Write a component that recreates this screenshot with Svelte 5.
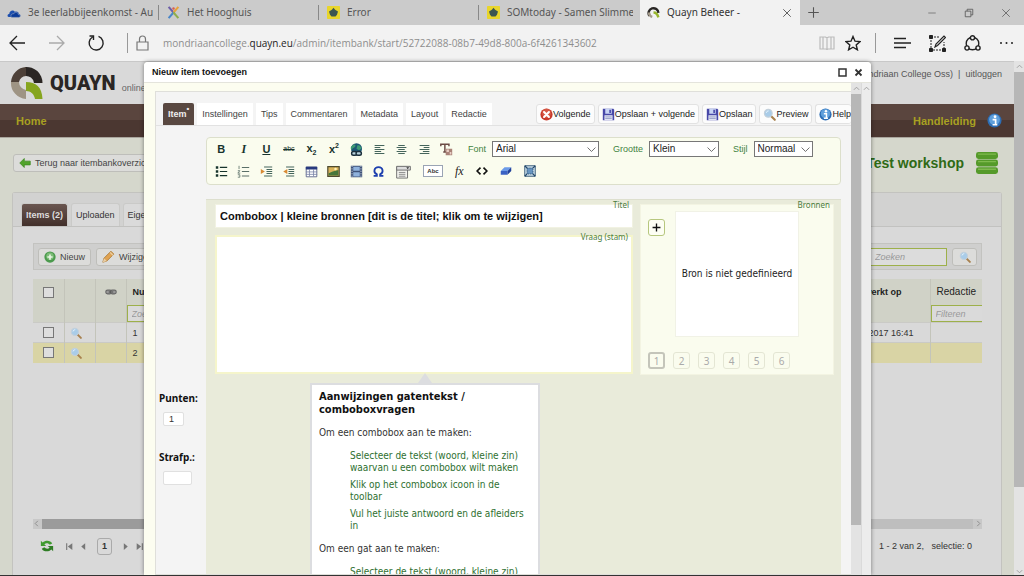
<script>
  const browserTabs = [
    { icon: 'cloud', title: '3e leerlabbijeenkomst - Aug' },
    { icon: 'cross', title: 'Het Hooghuis' },
    { icon: 'som', title: 'Error' },
    { icon: 'som', title: 'SOMtoday - Samen Slimme' }
  ];
  const itemTabs = ['Instellingen', 'Tips', 'Commentaren', 'Metadata', 'Layout', 'Redactie'];
  const actions = [
    { icon: 'stop', label: 'Volgende' },
    { icon: 'save', label: 'Opslaan + volgende' },
    { icon: 'save', label: 'Opslaan' },
    { icon: 'loupe', label: 'Preview' },
    { icon: 'info', label: 'Help' }
  ];
  const formatTools = ['bold', 'italic', 'underline', 'strike', 'sub', 'sup', 'globe', 'left', 'center', 'right', 'clear'];
  const insertTools = ['ul', 'ol', 'outdent', 'indent', 'table', 'image', 'film', 'omega'];
  const extraTools = ['combo', 'gap', 'fx', 'code', 'eraser', 'select'];
  const steps = [
    'Selecteer de tekst (woord, kleine zin) waarvan u een combobox wilt maken',
    'Klik op het combobox icoon in de toolbar',
    'Vul het juiste antwoord en de afleiders in'
  ];
  const rows = [
    { nr: 1, date: '10-03-2017 16:41', active: false },
    { nr: 2, date: '', active: true }
  ];
  let source = $state(1);
  let title = $state('Combobox | kleine bronnen [dit is de titel; klik om te wijzigen]');
  let points = $state('1');
  let penalty = $state('');
</script>

{#snippet icon(name, size = 14)}
  <svg class="icon" width={size} height={size} viewBox="0 0 16 16" fill="none" aria-hidden="true">
    {#if name === 'cloud'}
      <path d="M2 12.500C0 12 .3 9 2.600 9 2.600 5.500 7 4 9 6.500c3-1 4.500 1 4.500 2.500 2.500.2 2.500 3.500 0 3.500z" fill="#1d4fae" />
      <path d="M5 13c-1.500-3 1-4.500 2.500-4 1.500-3 5.500-2 5.500.8 3 0 3 3.200.5 3.200z" fill="#0c3b98" stroke="#cbcbcb" stroke-width=".5" />
    {:else if name === 'cross'}
      <path d="M2 1l6 7" stroke="#6d5ea8" stroke-width="2.500" /><path d="M14 1L8 8" stroke="#e8a33a" stroke-width="2.500" />
      <path d="M8 8l-6 7" stroke="#4a86c8" stroke-width="2.500" /><path d="M8 8l6 7" stroke="#8fae4c" stroke-width="2.500" />
      <circle cx="8" cy="3" r="1.500" fill="#d85c50" />
    {:else if name === 'som'}
      <rect width="16" height="16" rx="1" fill="#e8d52b" />
      <path d="M8 2l2 2.500 3.500 2.300-1.200 4L10.500 13h-5l-1.800-2.200-1.200-4L6 4.500z" fill="#3c5650" />
    {:else if name === 'quayn'}
      <path d="M3 12A6 6 0 1 1 14 8.500" stroke="#2a2725" stroke-width="3" /><path d="M2.500 8a5.500 5.500 0 0 0 4 5.300" stroke="#a59b8b" stroke-width="3" />
      <path d="M8 8c3 0 5 2 6 6" stroke="#97b52c" stroke-width="3" />
    {:else if name === 'stop'}
      <circle cx="8" cy="8" r="7.500" fill="#c93a2b" /><circle cx="8" cy="6.500" r="5.500" fill="#dd6a55" opacity=".6" />
      <path d="M5 5l6 6M11 5l-6 6" stroke="#fff" stroke-width="2.600" stroke-linecap="round" />
    {:else if name === 'save'}
      <path d="M1 1h13l1 1v13H1z" fill="#4848a8" /><path d="M4 1h8v6H4z" fill="#c8d4f4" /><path d="M9 2h2v4H9z" fill="#4848a8" />
      <path d="M3 9h10v6H3z" fill="#e5e8f5" /><path d="M4 11h8M4 13h8" stroke="#8890c0" />
    {:else if name === 'loupe'}
      <path d="M9.500 9.500l5 5" stroke="#a8814e" stroke-width="2.600" stroke-linecap="round" />
      <circle cx="6.500" cy="6.500" r="4.800" fill="#a9cce8" stroke="#c3d0db" stroke-width="1.400" /><path d="M4 6a3 3 0 0 1 3-2.500" stroke="#e5f2fb" stroke-width="1.200" />
    {:else if name === 'info'}
      <circle cx="8" cy="8" r="7.500" fill="#2c6db4" /><circle cx="8" cy="7" r="5.800" fill="#5f9fdb" />
      <circle cx="8.600" cy="4" r="1.500" fill="#fff" /><path d="M6 7h3.200v5M6 12.500h5" stroke="#fff" stroke-width="1.800" />
    {:else if name === 'add'}
      <circle cx="8" cy="8" r="7.500" fill="#4b9a4d" /><circle cx="8" cy="7" r="5" fill="#7cbc76" /><path d="M8 4.500v7M4.500 8h7" stroke="#e8f4e4" stroke-width="2.200" />
    {:else if name === 'pencil'}
      <path d="M1 15l1.500-5L11 1.500 14.500 5 6 13.500z" fill="#e0a352" stroke="#a87632" /><path d="M1 15l1.500-5L6 13.500z" fill="#e8cfa8" /><path d="M10 3l3.500 3.500" stroke="#e8cfa8" stroke-width="1.500" />
    {:else if name === 'back'}
      <path d="M1 8l6-6v3.500h8v5H7V14z" fill="#52a32c" stroke="#3f8a22" />
    {:else if name === 'chain'}
      <rect x="1" y="5.500" width="8" height="5" rx="2.500" fill="#999" stroke="#666" stroke-width="1.500" /><rect x="7" y="5.500" width="8" height="5" rx="2.500" fill="#999" stroke="#666" stroke-width="1.500" />
      <path d="M5 8h6" stroke="#555" stroke-width="1.500" />
    {:else if name === 'refresh'}
      <path d="M1 2v6h6L5 6c2-2 5-1 6 .5l3-1.500C12 1 6 1 3 4z" fill="#3f9a2f" /><path d="M15 14V8H9l2 2c-2 2-5 1-6-.5L2 11c2 4 8 4 11 1z" fill="#2f7d24" />
    {:else if name === 'db'}
      <rect y="0" width="16" height="5" rx="1.800" fill="#559a2a" /><rect y="5.500" width="16" height="5" rx="1.800" fill="#559a2a" /><rect y="11" width="16" height="5" rx="1.800" fill="#559a2a" />
      <path d="M1.500 1.500h13M1.500 7h13M1.500 12.500h13" stroke="#7fba4e" />
    {:else if name === 'globe'}
      <circle cx="8" cy="7" r="6.800" fill="#1d5674" /><path d="M3 3c3-3 5 0 3 2s-3 1-4 4C0 6 1 4 3 3zM9 3c3-1 5 2 5 4l-3 2-3-2z" fill="#3d9a74" />
      <rect x="2" y="10.500" width="6.500" height="4.500" rx="2.200" stroke="#1b2f3c" stroke-width="1.800" fill="#b9d2dc" /><rect x="7.500" y="10.500" width="6.500" height="4.500" rx="2.200" stroke="#1b2f3c" stroke-width="1.800" fill="#b9d2dc" />
    {:else if name === 'left'}
      <path d="M2 3h12M2 5.500h7M2 8h12M2 10.500h8M2 13h12" stroke="#45655c" stroke-width="1.300" />
    {:else if name === 'center'}
      <path d="M4 3h8M2 5.500h12M4 8h8M2 10.500h12M4 13h8" stroke="#45655c" stroke-width="1.300" />
    {:else if name === 'right'}
      <path d="M2 3h12M7 5.500h7M2 8h12M6 10.500h8M2 13h12" stroke="#45655c" stroke-width="1.300" />
    {:else if name === 'clear'}
      <path d="M1 4V1.500h10V4M6 1.500V11M4 11h4" stroke="#6a4a44" stroke-width="1.800" /><path d="M7 7h8v8H7z" fill="#a98278" /><path d="M8 8h3v3H8zM12 11h2v3h-2z" fill="#e9cfc6" />
    {:else if name === 'ul'}
      <path d="M1 3h3M1 8h3M1 13h3" stroke="#16332c" stroke-width="3" /><path d="M6 3h9M6 8h9M6 13h9" stroke="#16332c" stroke-width="1.500" />
    {:else if name === 'ol'}
      <path d="M2.500 1v4M1 7h2.500L1 10h3M1 12h2.500v3H1" stroke="#5a6f68" /><path d="M6 3h9M6 8h9M6 13.500h9" stroke="#5a6f68" stroke-width="1.300" />
    {:else if name === 'outdent' || name === 'indent'}
      <path d="M5 2.500h10M8 5.500h7M8 8h7M8 10.500h7M5 13.500h10" stroke="#45655c" stroke-width="1.400" />
      {#if name === 'outdent'}<path d="M1 5l5 3-5 3z" fill="#d98a34" />{:else}<path d="M6.500 5l-5 3 5 3z" fill="#d98a34" />{/if}
    {:else if name === 'table'}
      <path d="M1.500 2.500h13v12h-13z" fill="#fff" stroke="#4a5580" /><path d="M1 2h14v3.500H1z" fill="#27397e" /><path d="M1 8.500h14M1 11.500h14M5.500 5v9M10.500 5v9" stroke="#7a84a8" />
    {:else if name === 'image'}
      <path d="M1 2h14v12H1z" fill="#d9b35a" stroke="#4c4a30" stroke-width="1.500" /><path d="M2 13V10l5-2 7-2v7z" fill="#46763a" /><circle cx="10.500" cy="5" r="1.600" fill="#fff2b8" />
    {:else if name === 'film'}
      <path d="M1 1h14v14H1z" fill="#3e5278" /><path d="M4 2h8v5H4zM4 9h8v5H4z" fill="#8fb2dc" /><path d="M2.500 1v14M13.500 1v14" stroke="#dfe6f0" stroke-dasharray="1.500 1.500" />
    {:else if name === 'omega'}
      <path d="M2 13.500h4v-2C1 9 2.500 2.500 8 2.500S15 9 10 11.500v2h4" stroke="#1d3fae" stroke-width="2.200" />
    {:else if name === 'combo'}
      <path d="M.7 3h11.600v12H.7z" fill="#f4f4f0" stroke="#6c6c6c" /><path d="M.7 2.500h14.600v4H.7z" fill="#ddd" stroke="#6c6c6c" /><path d="M11 3.500h3l-1.500 2z" fill="#333" /><path d="M3 9h7M3 11h7M3 13h7" stroke="#888" />
    {:else if name === 'code'}
      <path d="M6 3.500L1.500 8 6 12.500M10 3.500L14.500 8 10 12.500" stroke="#111" stroke-width="2.200" />
    {:else if name === 'eraser'}
      <path d="M6 3h9l-5 5H1z" fill="#6c9be8" /><path d="M1 8h9v5H1z" fill="#3a62c4" /><path d="M10 8l5-5v5l-5 5z" fill="#1f3f9a" />
    {:else if name === 'select'}
      <path d="M1 1h14v14H1z" fill="#cfe2ee" stroke="#3d5f7a" stroke-width="1.300" /><path d="M4 4h8v8H4z" fill="#6694c0" stroke="#24486a" stroke-dasharray="2 1" /><path d="M1 1l3 3M15 1l-3 3M1 15l3-3M15 15l-3-3" stroke="#24486a" stroke-width="1.500" />
    {:else if name === 'x'}
      <path d="M3 3l10 10M13 3L3 13" stroke="currentColor" />
    {:else if name === 'plus'}
      <path d="M8 1.500v13M1.500 8h13" stroke="currentColor" stroke-width="1.300" />
    {:else if name === 'boldplus'}
      <path d="M8 1v14M1 8h14" stroke="#111" stroke-width="2.400" />
    {:else if name === 'min'}
      <path d="M2 8h12" stroke="currentColor" />
    {:else if name === 'restore'}
      <path d="M2 5h9v9H2zM5 5V2h9v9h-3" stroke="currentColor" stroke-width="1.300" />
    {:else if name === 'chev'}
      <path d="M1 4.500l7 7 7-7" stroke="#555" stroke-width="1.500" />
    {:else if name === 'up'}
      <path d="M2 11l6-6 6 6" stroke="#999" stroke-width="2" />
    {:else if name === 'down'}
      <path d="M2 5l6 6 6-6" stroke="#999" stroke-width="2" />
    {:else if name === 'lt'}
      <path d="M11 2L5 8l6 6" stroke="#888" stroke-width="2" />
    {:else if name === 'gt'}
      <path d="M5 2l6 6-6 6" stroke="#888" stroke-width="2" />
    {:else if name === 'first'}
      <path d="M3 2v12" stroke="#777" stroke-width="2" /><path d="M13 2v12L5 8z" fill="#777" />
    {:else if name === 'prev'}
      <path d="M11 2v12L4 8z" fill="#777" />
    {:else if name === 'next'}
      <path d="M5 2v12l7-6z" fill="#777" />
    {:else if name === 'last'}
      <path d="M13 2v12" stroke="#777" stroke-width="2" /><path d="M3 2v12l8-6z" fill="#777" />
    {/if}
  </svg>
{/snippet}

<div class="window">
  <header class="tabstrip">
    {#each browserTabs as tab}
      <button class="btab">{@render icon(tab.icon, tab.icon === 'cloud' ? 14 : 13)}<span>{tab.title}</span></button>
    {/each}
    <button class="btab current">{@render icon('quayn', 13)}<span>Quayn Beheer -</span>{@render icon('x', 12)}</button>
    <button class="newtab" aria-label="Nieuw tabblad">{@render icon('plus', 13)}</button>
    <div class="winctl">
      <button aria-label="Minimaliseren">{@render icon('min', 10)}</button>
      <button aria-label="Verkleinen">{@render icon('restore', 10)}</button>
      <button aria-label="Sluiten">{@render icon('x', 12)}</button>
    </div>
  </header>

  <nav class="address">
    <button aria-label="Vorige"><svg width="17" height="16" viewBox="0 0 17 16" fill="none" stroke="#222" stroke-width="1.300"><path d="M16 8H1M8 1L1 8l7 7" /></svg></button>
    <button aria-label="Volgende"><svg width="17" height="16" viewBox="0 0 17 16" fill="none" stroke="#aaa" stroke-width="1.300"><path d="M1 8h15M9 1l7 7-7 7" /></svg></button>
    <button aria-label="Vernieuwen"><svg width="18" height="18" viewBox="0 0 18 18" fill="none" stroke="#222" stroke-width="1.400"><path d="M11.500 2.400A7 7 0 1 1 5.500 3M2.500 2h4v4" /></svg></button>
    <span class="rule"></span>
    <svg width="13" height="16" viewBox="0 0 13 16" fill="none" stroke="#777" stroke-width="1.200"><path d="M1 7h11v8H1zM3.500 7V4a3 3 0 0 1 6 0v3" /></svg>
    <span class="url">mondriaancollege.<b>quayn.eu</b>/admin/itembank/start/52722088-08b7-49d8-800a-6f4261343602</span>
    <div class="tools">
      <button aria-label="Leesweergave"><svg width="16" height="14" viewBox="0 0 16 14" fill="none" stroke="#bbb" stroke-width="1.200"><path d="M1 1h5.500L8 2l1.500-1H15v12H9l-1 .5L7 13H1zM8 2v11M4 1v12M12 1v12" /></svg></button>
      <button aria-label="Favoriet"><svg width="16" height="16" viewBox="0 0 16 16" fill="none" stroke="#222" stroke-width="1.400"><path d="M8 1.500l2 4.700 5 .4-3.800 3.300 1.200 4.900L8 12.200l-4.400 2.600 1.200-4.900L1 6.600l5-.4z" /></svg></button>
      <span class="rule"></span>
      <button aria-label="Hub"><svg width="17" height="12" viewBox="0 0 17 12" stroke="#222" stroke-width="1.400"><path d="M0 1.500h12M0 6h17M0 10.500h12" /></svg></button>
      <button aria-label="Webnotitie"><svg width="17" height="17" viewBox="0 0 17 17" fill="none" stroke="#222"><path d="M2 2h8M2 2v13h13V7" stroke-dasharray="2 1" /><path d="M.5.5h3v3h-3zM.5 13.500h3v3h-3zM13.500 13.500h3v3h-3z" fill="#222" /><path d="M6 12l1-3 8-8 1.500 1.500-8 8z" stroke-width="1.200" /></svg></button>
      <button aria-label="Delen"><svg width="17" height="17" viewBox="0 0 17 17" fill="none" stroke="#222" stroke-width="1.400"><circle cx="8.500" cy="8.500" r="6.300" /><circle cx="8.500" cy="2.800" r="2.100" fill="#f2f2f2" /><circle cx="3" cy="13" r="2.100" fill="#f2f2f2" /><circle cx="14" cy="13" r="2.100" fill="#f2f2f2" /></svg></button>
      <button aria-label="Meer"><svg width="15" height="4" viewBox="0 0 15 4" fill="#222"><circle cx="2" cy="2" r="1" /><circle cx="7.500" cy="2" r="1" /><circle cx="13" cy="2" r="1" /></svg></button>
    </div>
  </nav>

  <div class="viewport">
    <div class="page">
      <div class="brand">
        <svg width="34" height="34" viewBox="0 0 34 34" fill="none">
          <path d="M15 1a16 16 0 0 1 17.500 16H24a8 8 0 0 0-9-7z" fill="#2b2624" />
          <path d="M1 16A16 16 0 0 1 16 1v9a8 8 0 0 0-7 6z" fill="#4d4038" />
          <path d="M1 16a16 16 0 0 0 15 17v-9a8 8 0 0 1-7-8z" fill="#9e9484" />
          <path d="M16 16c10 0 16 5 16.500 17H25c-1-5-4-8-9-8z" fill="#86a51f" />
        </svg>
        <span class="word">QUAYN</span><span class="sub">online toetsen</span>
        <span class="user">(Mondriaan College Oss) &nbsp;|&nbsp; <a href="#uit">uitloggen</a></span>
      </div>
      <div class="menubar"><a href="#home">Home</a><a class="help" href="#hulp">Handleiding {@render icon('info', 15)}</a></div>
      <div class="heading">
        <button class="pill">{@render icon('back', 12)}Terug naar itembankoverzicht</button>
        <h1>Test workshop</h1>
        {@render icon('db', 22)}
      </div>
      <section class="panel">
        <div class="ptabs"><button class="on">Items (2)</button><button>Uploaden</button><button>Eigenschappen</button></div>
        <div class="pbody">
          <div class="bar">
            <button class="pill">{@render icon('add', 12)}Nieuw</button>
            <button class="pill">{@render icon('pencil', 13)}Wijzigen</button>
            <input class="search" placeholder="Zoeken" aria-label="Zoeken" />
            <button class="pill" aria-label="Zoek">{@render icon('loupe', 12)}</button>
          </div>
          <table>
            <colgroup><col class="c31" /><col class="c31" /><col class="c31" /><col /><col class="cdate" /><col class="cred" /></colgroup>
            <thead>
              <tr>
                <th><input type="checkbox" aria-label="Alles selecteren" /></th><th></th><th>{@render icon('chain', 12)}</th>
                <th class="txt">Nummer</th><th class="edited">Bewerkt op</th><th class="txt light">Redactie</th>
              </tr>
              <tr class="filter">
                <th></th><th></th><th></th><th><input placeholder="Zoeken" aria-label="Zoek nummer" /></th><th></th><th><input placeholder="Filteren" aria-label="Filter redactie" /></th>
              </tr>
            </thead>
            <tbody>
              {#each rows as row}
                <tr class:active={row.active}>
                  <td><input type="checkbox" aria-label="Selecteer {row.nr}" /></td><td class="look">{@render icon('loupe', 12)}</td><td></td>
                  <td class="txt">{row.nr}</td><td class="date">{row.date}</td><td></td>
                </tr>
              {/each}
            </tbody>
          </table>
          <div class="hscroll">{@render icon('lt', 7)}<i></i>{@render icon('gt', 7)}</div>
          <div class="pager">
            {@render icon('refresh', 14)}
            <button aria-label="Eerste">{@render icon('first', 9)}</button>
            <button aria-label="Vorige">{@render icon('prev', 9)}</button>
            <button class="num">1</button>
            <button aria-label="Volgende">{@render icon('next', 9)}</button>
            <button aria-label="Laatste">{@render icon('last', 9)}</button>
            <span>1 - 2 van 2, &nbsp; selectie: 0</span>
          </div>
        </div>
      </section>
    </div>
    <div class="vscroll outer">{@render icon('up', 7)}<i></i>{@render icon('down', 7)}</div>

    <div class="dialog" role="dialog" aria-label="Nieuw item toevoegen">
      <div class="dtitle">
        <h2>Nieuw item toevoegen</h2>
        <button aria-label="Maximaliseren"><svg width="9" height="9" viewBox="0 0 9 9" fill="none"><path d="M1 1h7v7H1z" stroke="#333" stroke-width="1.500" /></svg></button>
        <button aria-label="Sluiten"><svg width="9" height="9" viewBox="0 0 9 9"><path d="M1.500 1.500l6 6M7.500 1.500l-6 6" stroke="#333" stroke-width="1.800" /></svg></button>
      </div>
      <div class="dbody">
        <div class="editor">
          <div class="etop">
            <button class="etab on">Item<sup>•</sup></button>
            {#each itemTabs as t}<button class="etab">{t}</button>{/each}
            <div class="actions">
              {#each actions as a}<button>{@render icon(a.icon, 13)}{a.label}</button>{/each}
            </div>
          </div>
          <div class="work">
            <aside>
              <label for="points">Punten:</label>
              <input id="points" class="short" bind:value={points} />
              <label for="penalty">Strafp.:</label>
              <input id="penalty" bind:value={penalty} />
            </aside>
            <div class="main">
              <div class="rich">
                <div class="line">
                  <div class="set eleven">
                    {#each formatTools as t}
                      <button aria-label={t}>
                        {#if t === 'bold'}<b>B</b>
                        {:else if t === 'italic'}<i class="it">I</i>
                        {:else if t === 'underline'}<u>U</u>
                        {:else if t === 'strike'}<s>abc</s>
                        {:else if t === 'sub'}<b>x<sub>2</sub></b>
                        {:else if t === 'sup'}<b>x<sup>2</sup></b>
                        {:else}{@render icon(t, 13)}{/if}
                      </button>
                    {/each}
                  </div>
                  <label for="font">Font</label>
                  <span class="sel wide"><select id="font"><option>Arial</option></select>{@render icon('chev', 9)}</span>
                  <label for="size">Grootte</label>
                  <span class="sel mid"><select id="size"><option>Klein</option></select>{@render icon('chev', 9)}</span>
                  <label for="style">Stijl</label>
                  <span class="sel"><select id="style"><option>Normaal</option></select>{@render icon('chev', 9)}</span>
                </div>
                <div class="line">
                  <div class="set eight">
                    {#each insertTools as t}<button aria-label={t}>{@render icon(t, 13)}</button>{/each}
                  </div>
                  <div class="extra">
                    {#each extraTools as t}
                      <button aria-label={t}>
                        {#if t === 'gap'}<span class="abc">Abc</span>
                        {:else if t === 'fx'}<i class="fx">fx</i>
                        {:else}{@render icon(t, t === 'combo' ? 15 : 12)}{/if}
                      </button>
                    {/each}
                  </div>
                </div>
              </div>

              <div class="canvas">
                <div class="question">
                  <div class="field ttl"><label for="title">Titel</label><input id="title" bind:value={title} /></div>
                  <div class="field stem"><label for="stem">Vraag (stam)</label><textarea id="stem"></textarea></div>
                  <div class="hint">
                    <h3>Aanwijzingen gatentekst / comboboxvragen</h3>
                    <p>Om een combobox aan te maken:</p>
                    <ul>{#each steps as s}<li>{s}</li>{/each}</ul>
                    <p>Om een gat aan te maken:</p>
                    <ul><li>Selecteer de tekst (woord, kleine zin) waarvan u een gat wilt maken</li></ul>
                  </div>
                </div>
                <div class="sources">
                  <span class="cap">Bronnen</span>
                  <div class="srow"><button class="plus" aria-label="Bron toevoegen">{@render icon('boldplus', 9)}</button><div class="empty">Bron is niet gedefinieerd</div></div>
                  <div class="nums">
                    {#each [1, 2, 3, 4, 5, 6] as n}<button class:on={source === n} onclick={() => (source = n)}>{n}</button>{/each}
                  </div>
                </div>
              </div>
            </div>
          </div>
        </div>
        <div class="vscroll inner">{@render icon('up', 7)}<i></i></div>
        <div class="vscroll blank">{@render icon('up', 7)}</div>
      </div>
    </div>
  </div>
</div>

<style>
  :global(body) { margin: 0; overflow: hidden; }
  * { box-sizing: border-box; }
  .window { display: flex; flex-direction: column; height: 100vh; overflow: hidden; border-bottom: 1px solid #333; font: 9px/12px "Liberation Sans", sans-serif; color: #333; background: #f2f2f2; }
  button, input, select, textarea { font: inherit; color: inherit; margin: 0; padding: 0; border: 0; background: none; border-radius: 0; }
  button { display: inline-flex; align-items: center; justify-content: center; white-space: nowrap; }
  a { color: inherit; text-decoration: none; }
  svg { flex: none; display: block; }

  .tabstrip { display: flex; height: 25px; flex: none; background: #cbcbcb; font: 10px/25px "Noto Sans", sans-serif; color: #555; }
  .btab { flex: 0 0 160px; min-width: 0; justify-content: flex-start; gap: 7px; padding: 0 7px; position: relative; overflow: hidden; }
  .btab:nth-child(-n+3)::after { content: ""; position: absolute; right: 1px; top: 5px; height: 15px; border-right: 1px solid #888; }
  .btab span { flex: 1; text-align: left; overflow: hidden; }
  .btab.current { background: #f2f2f2; color: #333; }
  .newtab { width: 26px; }
  .winctl { display: flex; margin-left: auto; }
  .winctl button { width: 37px; }

  .address { display: flex; align-items: center; height: 36px; flex: none; padding: 0 10px 0 9px; gap: 22px; background: #f2f2f2; }
  .address .rule { height: 20px; border-left: 1px solid #999; }
  .address > .rule + svg { margin-left: -14px; }
  .url { flex: 1; margin-left: -8px; font: 10px/16px "Open Sans", "Noto Sans", sans-serif; color: #8e8e8e; white-space: nowrap; }
  .url b { font-weight: 500; color: #222; }
  .tools { display: flex; align-items: center; gap: 18px; }
  .tools button:first-child { margin-right: -8px; }
  .tools .rule { margin: 0 0 0 -4px; }

  .viewport { position: relative; flex: 1; min-height: 0; display: flex; }
  .page { flex: 1; min-width: 0; display: flex; flex-direction: column; background: #d5d7cc; overflow: hidden; }
  .brand { display: flex; height: 43px; flex: none; padding: 4px 12px 0 10px; background: #d9d9d9; border-top: 1px solid #c8c8c8; }
  .word { margin: 6px 6px 0; font: 900 20px/23px Roboto, sans-serif; color: #2b2624; }
  .sub { margin-top: 16px; color: #666; }
  .user { margin: 2px 0 0 auto; color: #555; }
  .menubar { display: flex; justify-content: space-between; align-items: center; height: 34px; flex: none; padding: 0 12px 0 16px; background: linear-gradient(#5a453e 0 50%, #4b3731 50%); border-bottom: 1px solid #aaa69e; font: bold 11px/16px "Liberation Sans", sans-serif; color: #a8a022; }
  .help { display: flex; align-items: center; gap: 11px; }
  .heading { display: flex; align-items: center; height: 50px; flex: none; padding: 0 16px 0 13px; gap: 12px; }
  .heading h1 { margin: 0 0 0 auto; font: bold 14px/18px "Liberation Sans", sans-serif; color: #2f6a16; }
  .pill { height: 18px; padding: 0 5px; gap: 4px; border: 1px solid #bebeba; border-radius: 3px; background: #dcdcda; color: #444; }
  .panel { flex: 1; margin: 4px 12px 0; border: 1px solid #c3c3bf; border-bottom: 0; background: #d9d9d9; border-radius: 3px 3px 0 0; }
  .ptabs { display: flex; align-items: flex-end; gap: 3px; height: 34px; padding-left: 8px; background: #d2d2d1; border-bottom: 1px solid #c2c2c0; }
  .ptabs button { height: 23px; padding: 0 4px; background: #dadada; border: 1px solid #cacac8; border-bottom: 0; border-radius: 3px 3px 0 0; }
  .ptabs .on { background: linear-gradient(#6a5650, #42302b); color: #ddd; font-weight: bold; }
  .pbody { padding: 16px 19px 0 20px; }
  .bar { display: flex; align-items: center; gap: 5px; height: 27px; padding: 0 4px; background: #cfcfce; border: 1px solid #c3c3c0; }
  .bar .pill:last-child { padding: 0; width: 25px; }
  .search { margin-left: auto; width: 130px; height: 18px; padding: 0 0 0 57px; border: 1px solid #9db04a; background: #dcdcdc; font-style: italic; }
  ::placeholder { color: #999; opacity: 1; font-style: italic; }
  table { width: 100%; margin-top: 9px; border-collapse: collapse; table-layout: fixed; }
  .c31 { width: 31px; } .cdate { width: 110px; } .cred { width: 52px; }
  th, td { padding: 0; height: 20px; border-right: 1px solid #c3c4ba; text-align: center; vertical-align: middle; }
  th { height: 26px; background: #d0d2c7; color: #222; }
  th:last-child, td:last-child { border-right: 0; }
  .txt { text-align: left; padding-left: 6px; }
  .edited { text-align: right; padding-right: 28px; }
  th.light { font-weight: normal; font-size: 10px; }
  .date { text-align: right; padding-right: 16px; }
  .filter th { height: 17px; }
  .filter input { display: block; width: 100%; height: 17px; border: 1px solid #9db04a; border-right: 0; background: #dadada; padding-left: 4px; font-weight: normal; }
  th svg, td svg { margin: 0 auto; }
  td.look svg { margin-left: 5px; }
  tbody tr { border-top: 1px solid #cacac6; }
  tr.active { background: #d9d4a5; }
  input[type="checkbox"] { display: block; margin: 0 auto; appearance: none; width: 11px; height: 11px; border: 1px solid #777; background: #dedede; }
  .hscroll { display: flex; align-items: center; height: 10px; margin-top: 156px; background: #c8c8c8; gap: 2px; }
  .hscroll i { flex: 1; height: 10px; background: linear-gradient(90deg, #9b9b9b 50%, #bebebe 50%); }
  .pager { display: flex; align-items: center; height: 17px; margin: 9px 10px 0 7px; gap: 5px; }
  .pager .num { width: 15px; height: 17px; border: 1px solid #aaa; border-radius: 3px; font-weight: bold; margin: 0 4px; }
  .pager > svg { margin-right: 6px; }
  .pager span { margin-left: auto; }

  .vscroll { display: flex; flex-direction: column; align-items: center; width: 10px; flex: none; background: #e3e3e3; padding-top: 2px; }
  .vscroll i { display: block; width: 100%; margin-top: 2px; background: #b7b7b7; }
  .outer i { flex: 0 1 81%; }
  .outer svg:last-child { margin-top: auto; }

  .dialog { position: absolute; top: 1px; bottom: 0; left: 144px; right: 153px; display: flex; flex-direction: column; background: #fcfdf0; border-radius: 4px 4px 0 0; box-shadow: 0 0 4px rgba(0, 0, 0, .45); overflow: hidden; }
  .dtitle { display: flex; align-items: center; gap: 7px; height: 21px; flex: none; padding: 0 8px; background: #fff; border-bottom: 1px solid #e4e4dc; }
  h2 { margin: 0 auto 0 0; font: bold 9px/12px "Liberation Sans", sans-serif; color: #111; }
  .dbody { flex: 1; min-height: 0; display: flex; }
  .inner i { flex: 0 1 431px; }
  .blank { background: #ececec; border-left: 1px solid #dadada; }
  .editor { flex: 1; min-width: 0; margin: 8px 0 0 11px; background: #f4f4f4; border: 1px solid #dfdfda; border-right: 0; display: flex; flex-direction: column; overflow: hidden; }
  .etop { display: flex; align-items: flex-end; gap: 3px; height: 34px; flex: none; padding-left: 7px; border-bottom: 1px solid #e2e2e2; color: #444; }
  .etab { height: 22px; padding: 0 5px; background: #fff; }
  .etab.on { background: #594841; color: #eee; font-weight: bold; border-radius: 2px 2px 0 0; }
  .etab sup { font-size: 8px; line-height: 6px; align-self: flex-start; margin-top: 3px; }
  .actions { flex: 1; display: flex; justify-content: flex-end; gap: 3px; min-width: 0; padding-bottom: 1px; color: #222; }
  .actions button { flex: none; height: 20px; padding: 0 3px; background: #fcfcfc; border: 1px solid #e2e2e2; border-radius: 3px; }
  .actions button:last-child { border-right: 0; padding-right: 0; }

  .work { flex: 1; display: flex; min-height: 0; }
  aside { width: 50px; flex: none; display: flex; flex-direction: column; align-items: flex-start; padding: 265px 0 0 3px; }
  aside label { font: bold 10px/14px "Noto Sans", sans-serif; color: #111; }
  aside input { width: 29px; height: 14px; margin: 7px 0 24px 4px; background: #fff; border: 1px solid #e0e0e0; border-radius: 2px; padding-left: 5px; }
  aside input.short { width: 21px; }
  .main { flex: 1; min-width: 0; display: flex; flex-direction: column; padding: 11px 10px 0 0; }
  .rich { height: 48px; flex: none; padding: 0 3px; background: #fafcee; border: 1px solid #dcdfcb; border-radius: 4px; }
  .line { display: flex; align-items: center; height: 22px; }
  .line label { color: #3f833f; margin: 0 6px 0 14px; }
  .set { display: grid; flex: none; }
  .eleven { width: 248px; grid-template-columns: repeat(11, 1fr); }
  .eleven + label { margin-left: 10px; }
  .eight { width: 180px; grid-template-columns: repeat(8, 1fr); }
  .set button { height: 20px; font: 11px/14px "Liberation Sans", sans-serif; color: #17332d; }
  .set b, .set u { font-weight: bold; }
  .set sub, .set sup { font-size: 7px; line-height: 7px; }
  .set s { font: 7px/12px "Liberation Sans", sans-serif; }
  .it, .fx { font: italic bold 12px/14px "Liberation Serif", serif; }
  .extra { display: flex; gap: 12px; margin-left: 6px; }
  .fx { font-weight: normal; color: #222; }
  .abc { width: 20px; height: 12px; border: 1px solid #9aa4b4; background: #fff; font: bold 6px/10px "Liberation Sans", sans-serif; }
  .sel { display: grid; align-items: center; width: 59px; }
  .sel.wide { width: 107px; } .sel.mid { width: 70px; }
  .sel > :global(*) { grid-area: 1 / 1; }
  .sel svg { justify-self: end; margin-right: 3px; pointer-events: none; }
  select { appearance: none; width: 100%; height: 16px; padding: 0 3px; border: 1px solid #777; background: #fff; font: 10px/12px "Liberation Sans", sans-serif; color: #222; }

  .canvas { flex: 1; min-height: 0; margin-top: 14px; padding: 4px 7px 0 9px; display: flex; align-items: flex-start; gap: 7px; background: #e9ebda; border-top: 1px solid #dddfce; }
  .question { flex: 1; min-width: 0; }
  .field { display: grid; background: #fff; border: 1px solid #f1f2e2; }
  .field > :global(*) { grid-area: 1 / 1; }
  .field label, .cap { justify-self: end; align-self: start; z-index: 1; margin: -6px 3px 0 0; font: 8px/12px "Noto Sans", sans-serif; color: #4b7d40; }
  .ttl { height: 24px; }
  .ttl input { padding: 0 4px; font: bold 11px/14px "Liberation Sans", sans-serif; color: #111; width: 100%; }
  .stem { height: 139px; margin-top: 7px; border: 2px solid #f5f5cb; }
  .stem textarea { width: 100%; height: 100%; resize: none; outline: 0; }
  .hint { position: relative; width: 230px; margin: 9px 0 0 95px; padding: 5px 7px; background: #fff; border: 2px solid #dcdde0; font: 10px/12px "DejaVu Sans Condensed", sans-serif; color: #333; }
  .hint::before { content: ""; position: absolute; left: 50%; top: -12px; margin-left: -7px; border: 7px solid transparent; border-top: 0; border-bottom: 10px solid #dcdde0; }
  h3 { margin: 0; font: bold 11px/13px "DejaVu Sans Condensed", sans-serif; color: #111; }
  .hint p { margin: 11px 0; }
  ul { list-style: none; margin: 0; padding-left: 31px; color: #2e7030; }
  li { margin-bottom: 5px; }
  .sources { width: 194px; flex: none; height: 171px; display: flex; flex-direction: column; background: #fafcee; border: 1px solid #f3f4e2; padding: 0 7px; }
  .cap { align-self: flex-end; margin: -6px -4px 0 0; }
  .srow { display: flex; align-items: flex-start; gap: 10px; }
  .plus { width: 17px; height: 17px; margin-top: 8px; border: 1px solid #b7c77e; border-radius: 3px; background: #fdfef4; }
  .empty { width: 124px; height: 126px; display: grid; place-items: center; background: #fff; border: 1px solid #f1f2e6; font: 10px/12px "DejaVu Sans Condensed", sans-serif; color: #222; white-space: nowrap; }
  .nums { display: flex; gap: 8px; margin-top: 15px; }
  .nums button { width: 17px; height: 17px; border: 1px solid #e4e6d4; border-radius: 3px; color: #aaa; font: 10px/12px "Noto Sans", sans-serif; }
  .nums .on { border: 2px solid #c4c5ba; }
</style>
